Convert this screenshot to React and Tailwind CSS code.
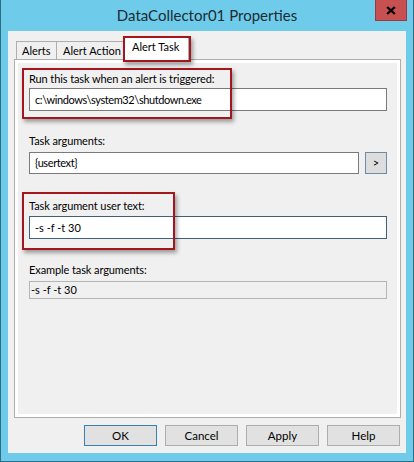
import React from "react";

const font = { fontFamily: 'Lato, "Noto Sans", sans-serif' };

function RedBox({ className }) {
  return (
    <div
      className={
        "absolute border-[2px] border-[#a3161d] shadow-[2px_3px_4px_rgba(0,0,0,0.35)] pointer-events-none " +
        className
      }
    />
  );
}

function Label({ children, className = "" }) {
  return (
    <div className={"h-[15px] leading-[15px] text-[11px] text-black ml-[11px] whitespace-nowrap tracking-[-0.1px] " + className}>{children}</div>
  );
}

function Btn({ children, def }) {
  return (
    <div
      className={
        "w-[73px] h-[21px] flex items-center justify-center text-[11.5px] text-black bg-[#e1e1e1] border " +
        (def ? "border-[#3c7fb1]" : "border-[#adadad]")
      }
    >
      {children}
    </div>
  );
}

export default function App() {
  return (
    <div
      className="relative w-[414px] h-[462px] bg-[#6ecbea] border-x border-b border-[#2c6e86] flex flex-col"
      style={font}
    >
      {/* Title bar */}
      <div className="relative h-[31px] flex items-center justify-center">
        <span className="text-[15px] text-[#1c2b33] leading-none mt-[-1px] whitespace-nowrap">DataCollector01 Properties</span>
        <div className="absolute right-[6px] top-0 w-[32px] h-[21px] bg-[#c75050] border border-[#9a3a3a] border-t-0 flex items-center justify-center">
          <svg width="10" height="9" viewBox="0 0 10 9">
            <path d="M1.2 1 L8.8 8 M8.8 1 L1.2 8" stroke="#000" strokeWidth="2.3" strokeLinecap="butt" />
          </svg>
        </div>
      </div>

      {/* Client area */}
      <div className="ml-[7px] w-[398px] h-[422px] bg-[#f0f0f0] flex flex-col">
        {/* Tab strip */}
        <div className="relative h-[28px] flex items-end pl-[8px] z-10">
          <div className="h-[18px] w-[41px] border border-b-0 border-[#adadad] bg-[#f0f0f0] text-[11px] leading-[17px] pl-[5px] whitespace-nowrap">
            Alerts
          </div>
          <div className="h-[18px] w-[67px] border border-l-0 border-b-0 border-[#adadad] bg-[#f0f0f0] text-[11px] leading-[17px] pl-[6px] whitespace-nowrap">
            Alert Action
          </div>
          <div className="h-[24px] w-[65px] -mb-[1px] border border-b-0 border-[#adadad] bg-white text-[11px] leading-[20px] pl-[7px] whitespace-nowrap">
            Alert Task
          </div>
          <RedBox className="left-[115px] top-[5px] w-[68px] h-[26px]" />
        </div>

        {/* Tab panel */}
        <div className="relative ml-[6px] w-[387px] h-[359px] border border-[#adadad] bg-white p-[3px]">
          <div className="w-full h-full bg-[#f0f0f0] flex flex-col pt-[8px]">
            <Label>Run this task when an alert is triggered:</Label>
            <div className="mt-[2px] ml-[11px] w-[358px] h-[23px] bg-white border border-[#7a7a7a] text-[11px] leading-[21px] pl-[5px] tracking-[-0.4px] whitespace-nowrap">
              c:\windows\system32\shutdown.exe
            </div>

            <Label className="mt-[22px]">Task arguments:</Label>
            <div className="mt-[4px] ml-[11px] flex gap-[6px]">
              <div className="w-[330px] h-[22px] bg-white border border-[#7a7a7a] text-[11px] leading-[20px] pl-[5px] tracking-[-0.4px]">
                {"{usertext}"}
              </div>
              <div className="w-[22px] h-[22px] bg-[#dddddd] border border-[#6f8ca3] text-[11px] flex items-center justify-center">
                &gt;
              </div>
            </div>

            <Label className="mt-[24px]">Task argument user text:</Label>
            <div className="mt-[3px] ml-[11px] w-[358px] h-[23px] bg-white border border-[#405f78] text-[11px] leading-[21px] pl-[5px]">
              -s -f -t 30
            </div>

            <Label className="mt-[23px]">Example task arguments:</Label>
            <div className="mt-[4px] ml-[11px] w-[358px] h-[18px] bg-[#f0f0f0] border border-[#b5b5b5] text-[11px] leading-[16px] pl-[1px]">
              -s -f -t 30
            </div>
          </div>
          <RedBox className="left-[7px] top-[8px] w-[210px] h-[51px]" />
          <RedBox className="left-[7px] top-[132px] w-[153px] h-[58px]" />
        </div>

        {/* Buttons */}
        <div className="mt-[7px] flex justify-end gap-[8px] pr-[6px]">
          <Btn def>OK</Btn>
          <Btn>Cancel</Btn>
          <Btn>Apply</Btn>
          <Btn>Help</Btn>
        </div>
      </div>
    </div>
  );
}
